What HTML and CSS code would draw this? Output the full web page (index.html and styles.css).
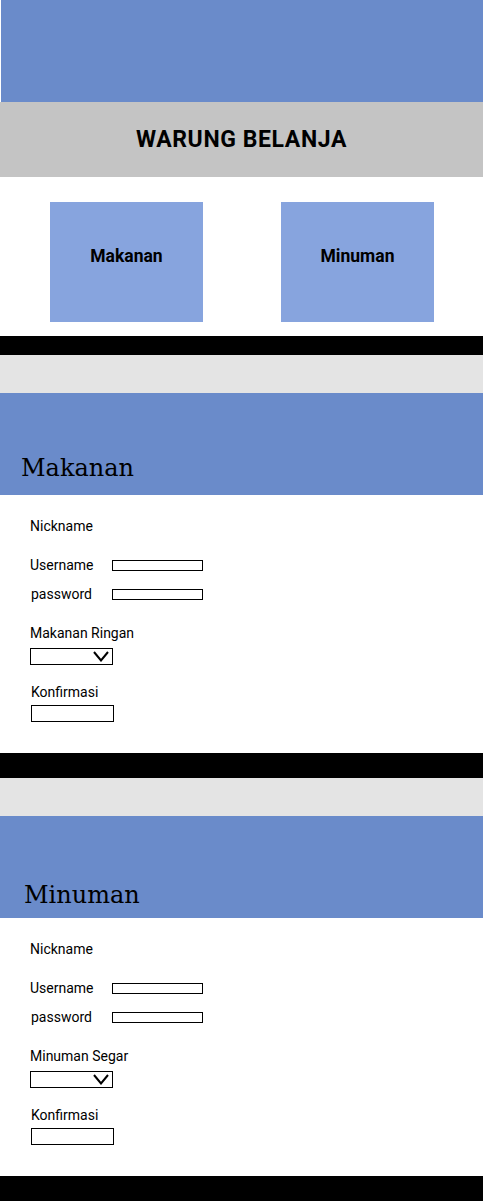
FILE: index.html
```html
<!DOCTYPE html>
<html lang="id">
<head>
<meta charset="utf-8">
<title>Warung Belanja</title>
<link rel="stylesheet" href="styles.css">
</head>
<body>
  <header class="hero"></header>
  <div class="title-bar"><h1 class="title">WARUNG BELANJA</h1></div>
  <nav class="menu">
    <a class="card" href="#makanan">Makanan</a>
    <a class="card" href="#minuman">Minuman</a>
  </nav>
  <div class="divider divider-thin"></div>

  <section class="order" id="makanan">
    <div class="spacer"></div>
    <div class="banner"><h2 class="banner-title">Makanan</h2></div>
    <form class="form">
      <div class="label">Nickname</div>
      <div class="row row-first"><span class="label row-label">Username</span><span class="input input-thin"></span></div>
      <div class="row"><span class="label row-label label-shift">password</span><span class="input input-thin"></span></div>
      <div class="label group-label">Makanan Ringan</div>
      <div class="select"><svg class="chevron" width="16" height="11" viewBox="0 0 16 11"><polyline points="1,1 8,9.5 15,1" fill="none" stroke="#000" stroke-width="2"/></svg></div>
      <div class="label label-shift confirm-label">Konfirmasi</div>
      <div class="input input-box"></div>
    </form>
  </section>
  <div class="divider"></div>

  <section class="order" id="minuman">
    <div class="spacer"></div>
    <div class="banner banner-alt"><h2 class="banner-title">Minuman</h2></div>
    <form class="form">
      <div class="label">Nickname</div>
      <div class="row row-first"><span class="label row-label">Username</span><span class="input input-thin"></span></div>
      <div class="row"><span class="label row-label label-shift">password</span><span class="input input-thin"></span></div>
      <div class="label group-label">Minuman Segar</div>
      <div class="select"><svg class="chevron" width="16" height="11" viewBox="0 0 16 11"><polyline points="1,1 8,9.5 15,1" fill="none" stroke="#000" stroke-width="2"/></svg></div>
      <div class="label label-shift confirm-label">Konfirmasi</div>
      <div class="input input-box"></div>
    </form>
  </section>
  <div class="divider"></div>
</body>
</html>
```

FILE: styles.css
```css
* { box-sizing: border-box; }

body {
  margin: 0;
  background: #fff;
  font-family: Roboto, "Liberation Sans", sans-serif;
  color: #000;
}

.hero {
  height: 102px;
  margin-left: 1px;
  background: #6a8bca;
}

.title-bar {
  height: 75px;
  background: #c4c4c4;
  display: flex;
  align-items: center;
  justify-content: center;
}

.title {
  margin: 0;
  font-size: 23px;
  font-weight: 700;
  line-height: 26px;
  letter-spacing: 0.6px;
}

.menu {
  height: 159px;
  padding: 25px 0 0 50px;
  display: flex;
  gap: 78px;
}

.card {
  width: 153px;
  height: 120px;
  background: #87a4de;
  padding-top: 44px;
  text-align: center;
  font-size: 17.5px;
  font-weight: 700;
  line-height: 20px;
  color: #000;
  text-decoration: none;
}

.divider {
  height: 25px;
  background: #000;
}

.divider-thin { height: 19px; }

.spacer {
  height: 38px;
  background: #e4e4e4;
}

.banner {
  height: 102px;
  background: #6a8bca;
  display: flex;
  align-items: flex-end;
  padding: 0 0 15px 21px;
}

.banner-alt {
  padding: 0 0 11px 24px;
}

.banner-title {
  margin: 0;
  font-family: "DejaVu Serif", "Liberation Serif", serif;
  font-weight: 400;
  font-size: 24px;
  line-height: 24px;
  color: #000;
}

.form {
  height: 258px;
  padding: 23px 0 0 30px;
  display: flex;
  flex-direction: column;
  align-items: flex-start;
}

.label {
  font-size: 14px;
  line-height: 16px;
  color: #000;
}

.label-shift { margin-left: 1px; }

.row {
  display: flex;
  align-items: center;
  height: 16px;
  margin-top: 13px;
}

.row-first { margin-top: 23px; }

.row-label {
  width: 82px;
  flex: none;
}

.label-shift.row-label { margin-left: 1px; width: 81px; }

.input {
  border: 1px solid #000;
  background: #fff;
}

.input-thin {
  width: 91px;
  height: 11px;
}

.group-label { margin-top: 23px; }

.select {
  margin-top: 7px;
  width: 83px;
  height: 17px;
  border: 1px solid #000;
  display: flex;
  align-items: center;
  justify-content: flex-end;
  padding-right: 3px;
}

.chevron { display: block; }

.confirm-label { margin-top: 19px; }

.input-box {
  margin-top: 5px;
  margin-left: 1px;
  width: 83px;
  height: 17px;
}
```
